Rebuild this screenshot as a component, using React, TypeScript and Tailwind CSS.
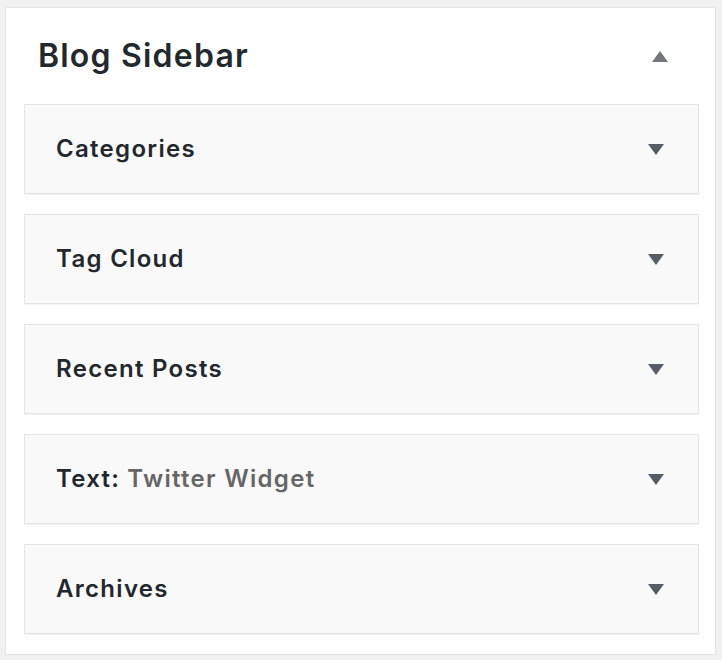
const widgets: { label: string; extra?: string }[] = [
  { label: "Categories" },
  { label: "Tag Cloud" },
  { label: "Recent Posts" },
  { label: "Text:", extra: "Twitter Widget" },
  { label: "Archives" },
];

function Arrow({ up = false, color }: { up?: boolean; color: string }) {
  return (
    <svg width="16" height="11" viewBox="0 0 16 11" className="block">
      <polygon points={up ? "0,11 16,11 8,0" : "0,0 16,0 8,11"} fill={color} />
    </svg>
  );
}

export default function App() {
  return (
    <div
      className="w-[722px] h-[660px] bg-[#f1f1f1] pt-[7px] pl-[5px] pr-[6px]"
      style={{ fontFamily: "Inter, 'Noto Sans', sans-serif" }}
    >
      <div className="h-[648px] bg-white border border-[#e5e5e5]">
        <div className="h-[96px] flex items-center justify-between pl-[32px] pr-[47px]">
          <h2 className="text-[32px] font-semibold text-[#23282d] tracking-[1.2px]">Blog Sidebar</h2>
          <Arrow up color="#72777c" />
        </div>
        <div className="flex flex-col gap-[20px] pl-[18px] pr-[16px]">
          {widgets.map((w) => (
            <div
              key={w.label}
              className="h-[90px] bg-[#f9f9f9] border border-[#e5e5e5] shadow-[0_1px_1px_rgba(0,0,0,0.04)] flex items-center justify-between pl-[31px] pr-[34px]"
            >
              <span className="text-[24px] font-semibold text-[#23282d] tracking-[1.3px]">
                {w.label}
                {w.extra && <span className="text-[#666] ml-[7px]">{w.extra}</span>}
              </span>
              <Arrow color="#555d66" />
            </div>
          ))}
        </div>
      </div>
    </div>
  );
}
